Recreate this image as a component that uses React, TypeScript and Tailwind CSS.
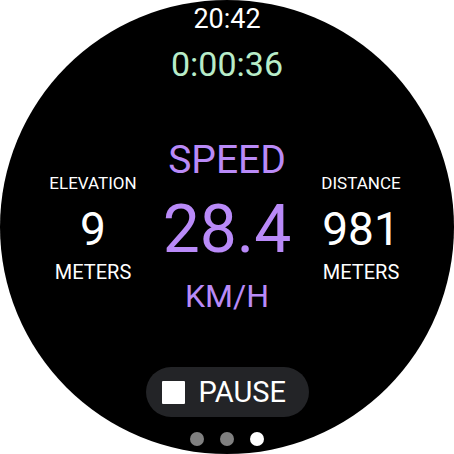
import React from 'react';

const SideStat: React.FC<{ label: string; value: string; unit: string }> = ({ label, value, unit }) => (
  <div className="flex flex-col items-center pt-[4px]">
    <span className="text-[17px] leading-[17px] text-white">{label}</span>
    <span className="mt-[14px] text-[46px] leading-[46px] text-white">{value}</span>
    <span className="mt-[10px] text-[20px] leading-[20px] text-white">{unit}</span>
  </div>
);

const App: React.FC = () => {
  return (
    <div className="w-[454px] h-[454px] bg-white font-[Roboto,sans-serif]">
      <div className="w-[454px] h-[454px] rounded-full bg-black flex flex-col items-center pt-[6px] overflow-hidden">
        <span className="text-[27px] leading-[27px] text-white">20:42</span>
        <span className="mt-[14px] text-[34px] leading-[34px] text-[#b8ecc8]">0:00:36</span>

        <div className="mt-[60px] grid grid-cols-[134px_134px_134px] items-center">
          <SideStat label="ELEVATION" value="9" unit="METERS" />
          <div className="flex flex-col items-center text-[#b98af8]">
            <span className="text-[39px] leading-[39px]">SPEED</span>
            <span className="mt-[17px] text-[66px] leading-[66px]">28.4</span>
            <span className="mt-[17px] text-[32px] leading-[32px]">KM/H</span>
          </div>
          <SideStat label="DISTANCE" value="981" unit="METERS" />
        </div>

        <button className="mt-[55px] w-[163px] h-[50px] rounded-full bg-[#232427] flex items-center pl-[16px] gap-[14px]">
          <span className="w-[23px] h-[23px] bg-white rounded-[1px]" />
          <span className="text-[29px] leading-[29px] text-white">PAUSE</span>
        </button>

        <div className="mt-[15px] flex gap-[16px]">
          <span className="w-[14px] h-[14px] rounded-full bg-[#808080]" />
          <span className="w-[14px] h-[14px] rounded-full bg-[#808080]" />
          <span className="w-[14px] h-[14px] rounded-full bg-white" />
        </div>
      </div>
    </div>
  );
};

export default App;
